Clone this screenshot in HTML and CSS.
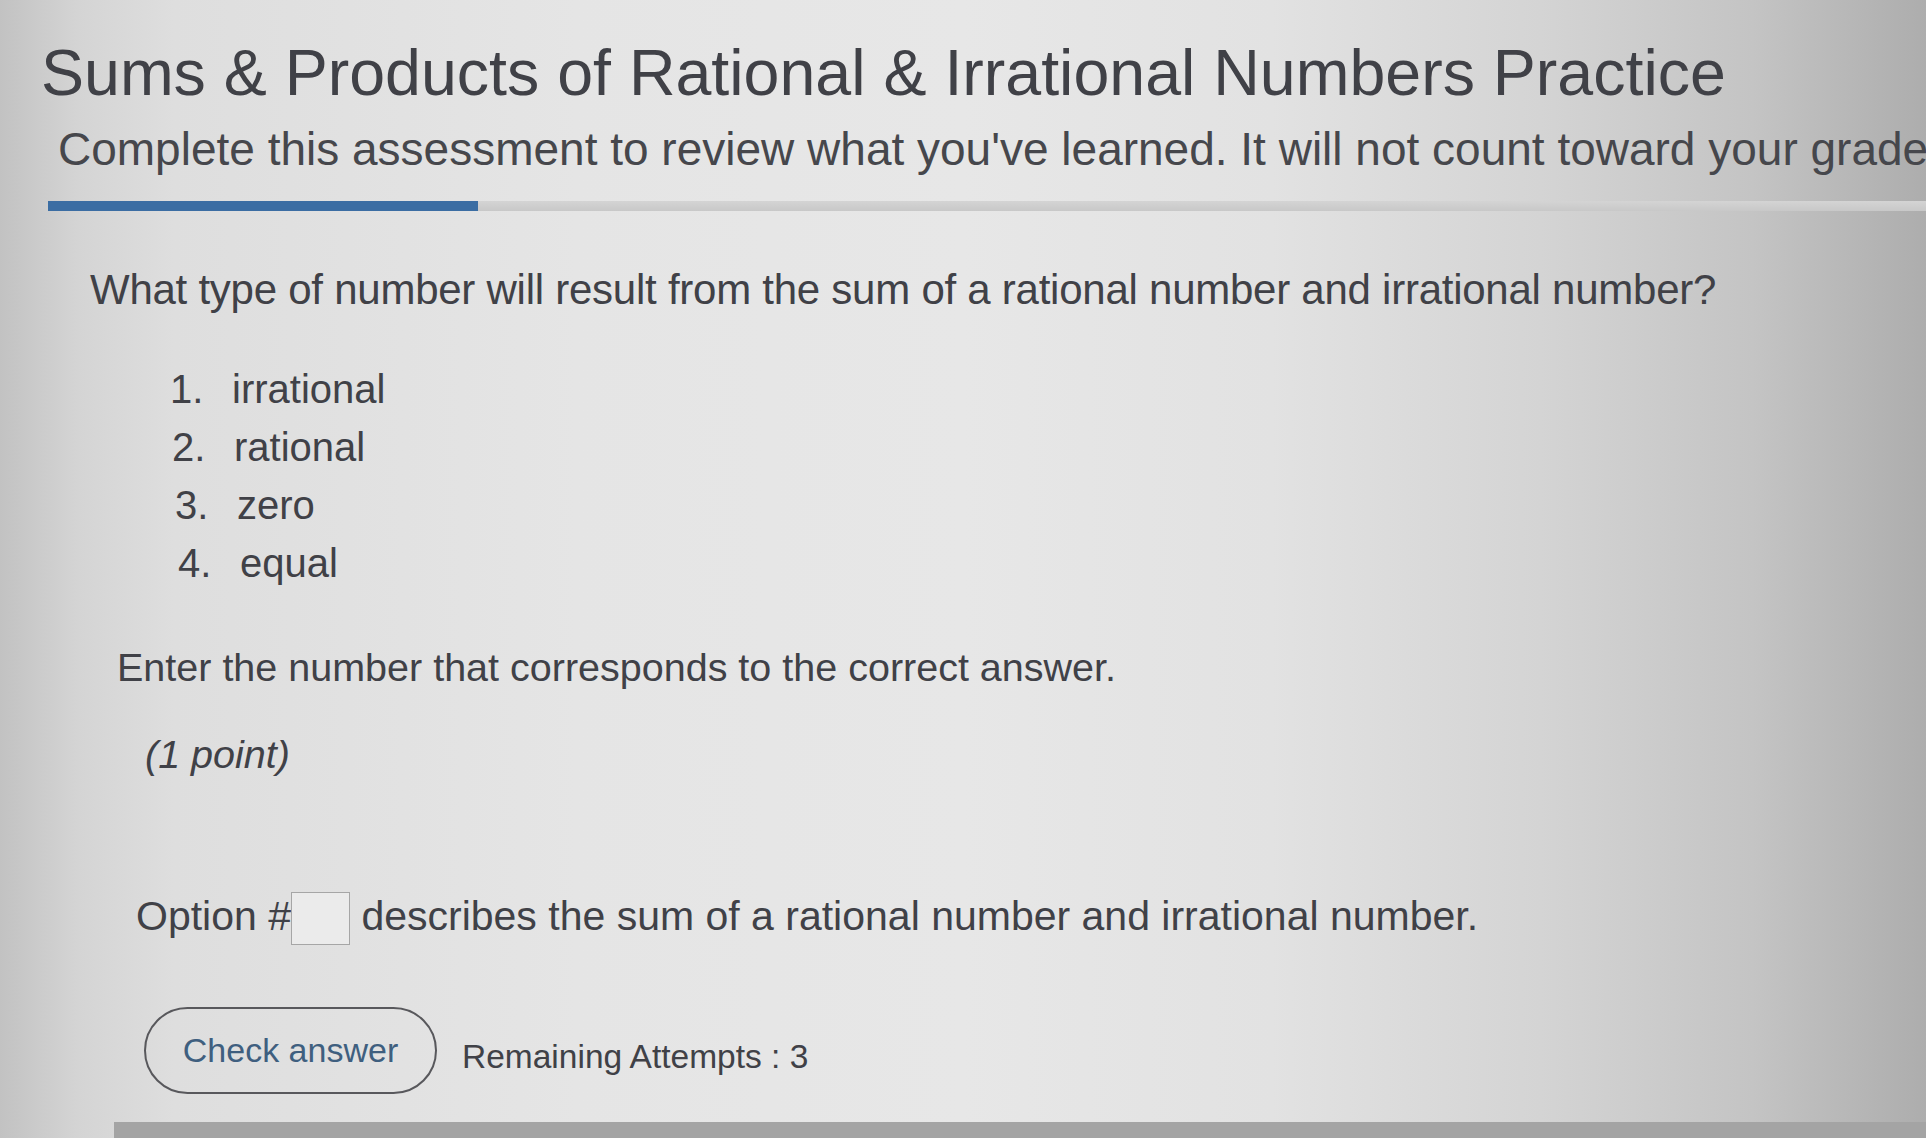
FILE: index.html
```html
<!DOCTYPE html>
<html lang="en">
<head>
<meta charset="utf-8">
<title>Sums &amp; Products of Rational &amp; Irrational Numbers Practice</title>
<link rel="stylesheet" href="styles.css">
</head>
<body>
<div class="page">
  <header class="header">
    <h1 class="title">Sums &amp; Products of Rational &amp; Irrational Numbers Practice</h1>
    <p class="subtitle">Complete this assessment to review what you've learned. It will not count toward your grade</p>
  </header>
  <div class="progress"><div class="progress-fill"></div></div>
  <main class="question">
    <p class="prompt">What type of number will result from the sum of a rational number and irrational number?</p>
    <ol class="choices">
      <li class="choice"><span class="num">1.</span><span class="label">irrational</span></li>
      <li class="choice"><span class="num">2.</span><span class="label">rational</span></li>
      <li class="choice"><span class="num">3.</span><span class="label">zero</span></li>
      <li class="choice"><span class="num">4.</span><span class="label">equal</span></li>
    </ol>
    <p class="instruction">Enter the number that corresponds to the correct answer.</p>
    <p class="points">(1 point)</p>
    <p class="answer-line">Option #<span class="answer-box"></span> describes the sum of a rational number and irrational number.</p>
    <div class="actions">
      <button class="check-btn" type="button">Check answer</button>
      <span class="attempts">Remaining Attempts : 3</span>
    </div>
  </main>
  <div class="footer-bar"></div>
</div>
</body>
</html>
```
FILE: styles.css
```css
html, body {
  margin: 0;
  padding: 0;
  height: 100%;
  overflow: hidden;
}
body {
  font-family: "Liberation Sans", Arial, Helvetica, sans-serif;
  color: #404147;
  background: linear-gradient(90deg, #c2c2c2 0%, #d4d4d4 4%, #dedede 9%, #e5e5e5 30%, #e7e7e7 50%, #e2e2e2 66%, #d4d4d4 80%, #c4c4c4 91%, #adadad 100%);
}
.page {
  display: flex;
  flex-direction: column;
  height: 100%;
  white-space: nowrap;
}
.header {
  padding: 33px 0 0 41px;
}
.title {
  margin: 0;
  font-size: 64.5px;
  line-height: 80px;
  font-weight: normal;
  color: #404147;
}
.subtitle {
  margin: 6px 0 0 17px;
  font-size: 46px;
  line-height: 60px;
  color: #46474c;
}
.progress {
  margin: 22px 0 0 48px;
  height: 10px;
  background: linear-gradient(180deg, #d4d4d4, #c8c8c8);
}
.progress-fill {
  width: 430px;
  height: 100%;
  background: #3b6da3;
}
.question {
  padding-left: 90px;
  flex: 1;
}
.prompt {
  margin: 51px 0 0;
  font-size: 42px;
  line-height: 56px;
  letter-spacing: -0.25px;
}
.choices {
  list-style: none;
  margin: 42px 0 0;
  padding: 0 0 0 80px;
}
.choice {
  display: flex;
  font-size: 40px;
  line-height: 58px;
}
.choice:nth-child(2) { padding-left: 2px; }
.choice:nth-child(3) { padding-left: 5px; }
.choice:nth-child(4) { padding-left: 8px; }
.num {
  width: 62px;
}
.instruction {
  margin: 47px 0 0 27px;
  font-size: 39.5px;
  line-height: 56px;
}
.points {
  margin: 31px 0 0 55px;
  font-size: 39.5px;
  line-height: 56px;
  font-style: italic;
}
.answer-line {
  margin: 104px 0 0 46px;
  font-size: 41px;
  line-height: 60px;
}
.answer-box {
  display: inline-block;
  width: 57px;
  height: 51px;
  border: 1.5px solid #a6a6a6;
  background: #ebebeb;
  vertical-align: -15px;
}
.actions {
  display: flex;
  align-items: center;
  gap: 25px;
  margin: 61px 0 0 54px;
}
.check-btn {
  width: 293px;
  height: 87px;
  border: 2px solid #58585c;
  border-radius: 44px;
  background: transparent;
  font-family: inherit;
  font-size: 34px;
  color: #3f5f7f;
  padding: 0;
}
.attempts {
  font-size: 33.5px;
  color: #404147;
  padding-top: 12px;
}
.footer-bar {
  margin-left: 114px;
  height: 16px;
  background: #a4a4a4;
}
```
